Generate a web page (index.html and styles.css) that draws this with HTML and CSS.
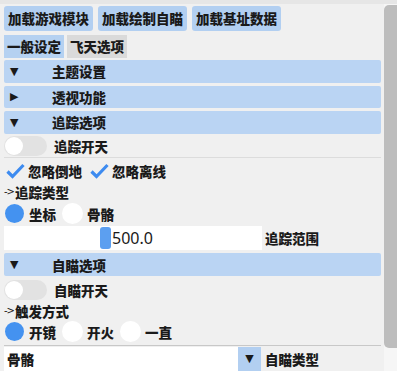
FILE: index.html
```html
<!DOCTYPE html>
<html>
<head>
<meta charset="utf-8">
<link rel="stylesheet" href="styles.css">
</head>
<body>
<div class="window">
  <div class="content">
    <div class="row btn-row">
      <div class="btn">加载游戏模块</div>
      <div class="btn">加载绘制自瞄</div>
      <div class="btn">加载基址数据</div>
    </div>
    <div class="row tab-row">
      <div class="tab active">一般设定</div>
      <div class="tab">飞天选项</div>
    </div>
    <div class="header h1"><span class="arrow">▼</span><span class="htext">主题设置</span></div>
    <div class="header h2"><span class="arrow">▶</span><span class="htext">透视功能</span></div>
    <div class="header h3"><span class="arrow">▼</span><span class="htext">追踪选项</span></div>
    <div class="row toggle-row t1"><div class="toggle"><div class="knob"></div></div><span class="lbl">追踪开天</span></div>
    <div class="sep s1"></div>
    <div class="row check-row">
      <span class="check"><svg width="19" height="16" viewBox="0 0 19 16"><path d="M1.5 8.5 L6.5 13.5 L17.5 2" fill="none" stroke="#3d8bf0" stroke-width="3.2"/></svg></span><span class="lbl">忽略倒地</span>
      <span class="check c2"><svg width="19" height="16" viewBox="0 0 19 16"><path d="M1.5 8.5 L6.5 13.5 L17.5 2" fill="none" stroke="#3d8bf0" stroke-width="3.2"/></svg></span><span class="lbl">忽略离线</span>
    </div>
    <div class="row text-row r1"><span class="small">-&gt;</span><span class="lbl">追踪类型</span></div>
    <div class="row radio-row r2">
      <span class="radio on"></span><span class="lbl">坐标</span>
      <span class="radio off"></span><span class="lbl">骨骼</span>
    </div>
    <div class="row slider-row">
      <div class="slider"><div class="grab"></div><span class="val">500.0</span></div>
      <span class="lbl">追踪范围</span>
    </div>
    <div class="header h4"><span class="arrow">▼</span><span class="htext">自瞄选项</span></div>
    <div class="row toggle-row t2"><div class="toggle"><div class="knob"></div></div><span class="lbl">自瞄开天</span></div>
    <div class="row text-row r3"><span class="small">-&gt;</span><span class="lbl">触发方式</span></div>
    <div class="row radio-row r4">
      <span class="radio on"></span><span class="lbl">开镜</span>
      <span class="radio off"></span><span class="lbl">开火</span>
      <span class="radio off"></span><span class="lbl">一直</span>
    </div>
    <div class="sep s2"></div>
    <div class="row combo-row">
      <div class="combo"><span class="cval">骨骼</span></div>
      <div class="combo-btn">▼</div>
      <span class="lbl">自瞄类型</span>
    </div>
  </div>
  <div class="scrollbar"><div class="grabber"></div></div>
</div>
</body>
</html>
```
FILE: styles.css
```css
html, body {
  margin: 0;
  padding: 0;
  background: #f0f0f0;
  width: 397px;
  height: 371px;
  overflow: hidden;
  font-family: "Noto Sans CJK SC", "Noto Sans", sans-serif;
  font-weight: 900;
  font-size: 13.5px;
  color: #1a1a1a;
}
.window {
  display: flex;
  height: 371px;
  border-top: 4px solid #e6e6e6;
  box-sizing: border-box;
}
.content {
  width: 384px;
  padding: 2px 3px 0 4px;
  box-sizing: border-box;
  display: flex;
  flex-direction: column;
}
.scrollbar {
  width: 13px;
  background: #f6f6f6;
  padding-top: 1px;
}
.grabber {
  height: 343px;
  background: #bdbdbd;
  border-radius: 5px 0 0 5px;
}
.row {
  display: flex;
  align-items: center;
}
.btn-row { height: 25px; gap: 5px; }
.btn {
  height: 25px;
  line-height: 25px;
  padding: 0 4px;
  background: #b2cff1;
  border-radius: 3px;
}
.tab-row { height: 23px; margin-top: 4px; gap: 3px; }
.tab {
  height: 23px;
  line-height: 23px;
  padding: 0 3px;
  background: #dadada;
}
.tab.active { background: #b5d1f1; }
.header {
  height: 23px;
  background: #bad4f3;
  display: flex;
  align-items: center;
  border-radius: 2px;
  margin-top: 2px;
}
.h2, .h3 { margin-top: 3px; }
.h4 { margin-top: 3px; }
.arrow {
  font-family: "DejaVu Sans", sans-serif;
  font-size: 11px;
  width: 48px;
  padding-left: 6px;
  box-sizing: border-box;
}
.t1 { height: 20px; margin-top: 2px; }
.t2 { height: 20px; margin-top: 4px; }
.toggle {
  width: 43px;
  height: 20px;
  background: #e2e2e2;
  border-radius: 10px;
  margin-right: 7px;
  position: relative;
}
.knob {
  position: absolute;
  left: 1px;
  top: 1px;
  width: 18px;
  height: 18px;
  border-radius: 50%;
  background: #ffffff;
}
.sep { height: 1px; background: #dcdcdc; }
.s1 { margin-top: 1px; }
.s2 { margin-top: 3px; background: #c8c8c8; }
.check-row { height: 21px; margin-top: 3px; }
.check { width: 24px; display: flex; align-items: center; padding-left: 2px; box-sizing: border-box; }
.check.c2 { margin-left: 6px; }
.text-row { height: 15px; }
.r1 { margin-top: 3px; }
.r3 { margin-top: 3px; }
.small {
  font-family: "DejaVu Sans", sans-serif;
  font-weight: 400;
  font-size: 10px;
  letter-spacing: -1px;
  margin-right: 1px;
}
.radio-row { height: 21px; }
.r2 { margin-top: 4px; }
.r4 { margin-top: 3px; }
.radio {
  width: 19px;
  height: 19px;
  border-radius: 50%;
  margin: 0 5px 0 1px;
  flex: none;
}
.radio.on { background: #4492f0; }
.radio.off { background: #ffffff; width: 21px; height: 21px; margin-left: 6px; margin-right: 4px; }
.slider-row { height: 24px; margin-top: 2px; }
.slider {
  width: 258px;
  height: 24px;
  background: #ffffff;
  display: flex;
  align-items: center;
  padding-left: 96px;
  box-sizing: border-box;
}
.grab {
  width: 11px;
  height: 22px;
  border-radius: 3px;
  background: #5c9ff0;
}
.val {
  font-family: "Noto Sans", sans-serif;
  font-weight: 400;
  font-size: 16px;
  margin-left: 1px;
}
.slider-row .lbl { margin-left: 3px; }
.combo-row { height: 24px; margin-top: 1px; }
.combo {
  width: 234px;
  height: 24px;
  background: #ffffff;
  display: flex;
  align-items: center;
  padding-left: 3px;
  box-sizing: border-box;
}
.combo-btn {
  width: 23px;
  height: 24px;
  background: #b2cff1;
  font-family: "DejaVu Sans", sans-serif;
  font-size: 11px;
  display: flex;
  align-items: center;
  justify-content: center;
}
.combo-row .lbl { margin-left: 4px; }
```
